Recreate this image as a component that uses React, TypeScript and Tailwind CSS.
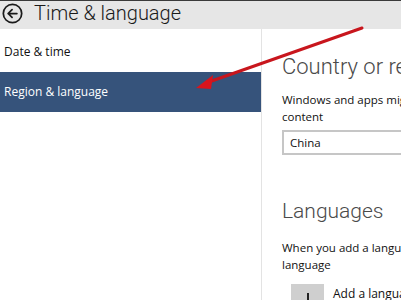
export default function App() {
  return (
    <div className="relative w-[401px] h-[300px] overflow-hidden bg-white font-['Open_Sans',sans-serif]">
      <div className="h-[1px] bg-[#3a3a3a]" />
      <header className="h-[28px] bg-[#e6e6e6] flex items-center">
        <svg className="ml-[2px] w-[21px] h-[21px] -mt-[4px] shrink-0" viewBox="0 0 24 24" fill="none">
          <circle cx="12" cy="12" r="10.5" stroke="#1a1a1a" strokeWidth="2" />
          <path d="M17 12H7M11.5 7.5L7 12l4.5 4.5" stroke="#1a1a1a" strokeWidth="2" strokeLinecap="round" strokeLinejoin="round" />
        </svg>
        <span className="ml-[11px] -mt-[5px] font-['Roboto',sans-serif] text-[20px] leading-none text-[#1a1a1a] font-light">Time &amp; language</span>
      </header>

      <div className="flex h-[271px]">
        <nav className="w-[262px] shrink-0 border-r border-[#e3e3e3] pt-[8px]">
          <div className="h-[30px] flex items-center px-[4px] text-[12px] text-[#111]">Date &amp; time</div>
          <div className="h-[40px] mt-[5px] flex items-center px-[4px] text-[12px] text-white bg-[#36537b]">Region &amp; language</div>
        </nav>

        <main className="flex-1 min-w-0 pl-[20px] whitespace-nowrap overflow-hidden">
          <h1 className="mt-[23px] font-['Roboto',sans-serif] text-[22px] leading-[30px] font-light text-[#4a4a4a]">Country or region</h1>
          <p className="mt-[9px] text-[11.5px] leading-[17px] text-[#111]">Windows and apps might use your country to give you local<br />content</p>
          <div className="mt-[5px] w-[200px] h-[25px] border-2 border-[#c6c6c6] flex items-center pl-[6px] text-[11.5px] text-[#111]">China</div>
          <h2 className="mt-[42px] font-['Roboto',sans-serif] text-[21px] leading-[28px] font-light text-[#4a4a4a]">Languages</h2>
          <p className="mt-[14px] text-[11.5px] leading-[17px] text-[#111]">When you add a language to this list, apps will use this<br />language</p>
          <div className="mt-[11px] ml-[9px] flex items-start gap-[9px]">
            <div className="w-[33px] h-[33px] shrink-0 bg-[#cfcfcf] flex items-center justify-center">
              <svg width="16" height="16" viewBox="0 0 16 16">
                <path d="M8 0v16M0 8h16" stroke="#222" strokeWidth="2" />
              </svg>
            </div>
            <span className="mt-[1px] text-[12px] text-[#111]">Add a language</span>
          </div>
        </main>
      </div>

      <svg className="absolute left-0 top-0 pointer-events-none" width="401" height="300" viewBox="0 0 401 300">
        <line x1="362" y1="28" x2="206" y2="83" stroke="#c8161d" strokeWidth="3" strokeLinecap="round" />
        <polygon points="196,88 213,75 211,89" fill="#d9141c" />
      </svg>
    </div>
  );
}
